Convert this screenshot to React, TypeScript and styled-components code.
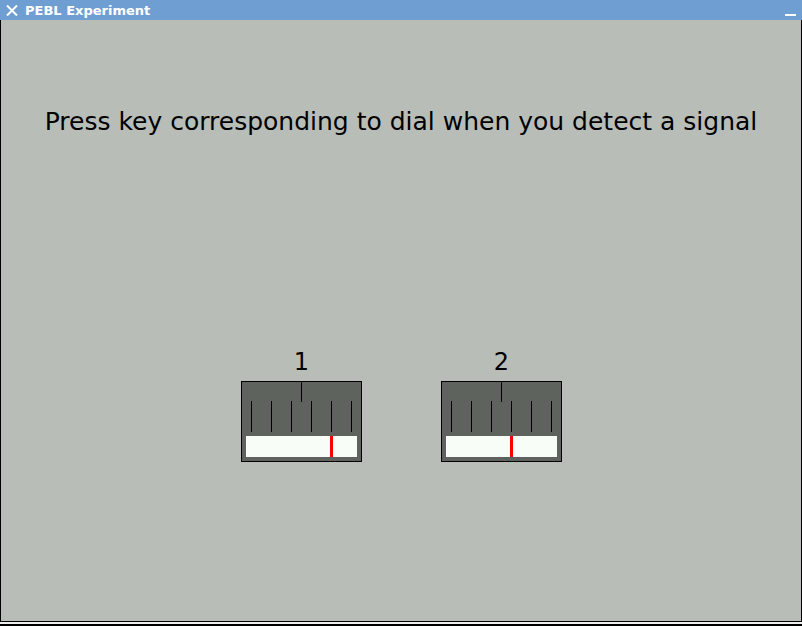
import React from "react";
import styled, {createGlobalStyle} from "styled-components";

const GlobalStyle = createGlobalStyle`
  html, body {
    margin: 0;
    padding: 0;
    background: #000;
  }
  body {
    font-family: "DejaVu Sans", "Liberation Sans", sans-serif;
  }
`

const Window = styled.div`
  width: 802px;
  height: 626px;
  display: flex;
  flex-direction: column;
  overflow: hidden;
  background: #000;
`

const TitleBar = styled.div`
  height: 20px;
  flex: none;
  display: flex;
  align-items: center;
  background: #6f9fd2;
  color: #fff;
  font-weight: bold;
  font-size: 13px;
  padding: 1px 6px 0 6px;
  box-sizing: border-box;
`

const TitleText = styled.span`
  margin-left: 7px;
  line-height: 20px;
  flex: 1;
`

const Minimize = styled.div`
  width: 11px;
  height: 2px;
  background: #fff;
  align-self: flex-end;
  margin-bottom: 4px;
`

const Content = styled.div`
  height: 602px;
  flex: none;
  background: #b8bdb8;
  border: 1px solid #000;
  border-top: none;
  display: flex;
  flex-direction: column;
  align-items: center;
  box-sizing: border-box;
`

const BottomStrip = styled.div`
  height: 2px;
  flex: none;
  background: #eeeeee;
`

const Prompt = styled.div`
  margin-top: 89px;
  font-size: 25px;
  line-height: 25px;
  color: #000;
  white-space: nowrap;
`

const DialRow = styled.div`
  margin-top: 216px;
  display: flex;
  gap: 79px;
  margin-left: 1px;
`

const DialColumn = styled.div`
  display: flex;
  flex-direction: column;
  align-items: center;
`

const DialLabel = styled.div`
  font-size: 24px;
  line-height: 24px;
  color: #000;
  margin-bottom: 7px;
`

const DialFace = styled.div`
  width: 119px;
  height: 79px;
  border: 1px solid #000;
  background: #5e635e;
`

const Dial: React.FC<{label: string, needle: number}> = ({label, needle}) => {
    const ticks = [9, 29, 49, 69, 89, 109]
    return <DialColumn>
        <DialLabel>{label}</DialLabel>
        <DialFace>
            <svg width="119" height="79" viewBox="0 0 119 79" shapeRendering="crispEdges">
                <rect x="59" y="0" width="1" height="20" fill="#000"/>
                {ticks.map(x => <rect key={x} x={x} y="19" width="1" height="31" fill="#000"/>)}
                <rect x="4" y="54" width="111" height="21" fill="#f8fdf8"/>
                <rect x={needle} y="54" width="3" height="21" fill="#ff0000"/>
            </svg>
        </DialFace>
    </DialColumn>
}

export default function App() {
    return <>
        <GlobalStyle/>
        <Window>
            <TitleBar>
                <svg width="12" height="11" viewBox="0 0 12 11">
                    <path d="M1 0.5 L11 10.5 M11 0.5 L1 10.5" stroke="#fff" strokeWidth="2"/>
                </svg>
                <TitleText>PEBL Experiment</TitleText>
                <Minimize/>
            </TitleBar>
            <Content>
                <Prompt>Press key corresponding to dial when you detect a signal</Prompt>
                <DialRow>
                    <Dial label="1" needle={88}/>
                    <Dial label="2" needle={68}/>
                </DialRow>
            </Content>
            <BottomStrip/>
        </Window>
    </>
}
